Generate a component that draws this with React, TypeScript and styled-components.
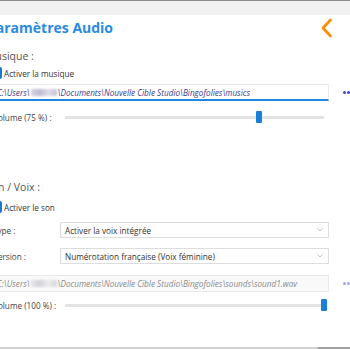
import React from "react";
import styled, { createGlobalStyle } from "styled-components";

const GlobalStyle = createGlobalStyle`
  html, body {
    margin: 0;
    padding: 0;
    background: #ffffff;
  }
  body {
    font-family: "Open Sans", "Noto Sans", sans-serif;
  }
`;

const Page = styled.div`
  width: 350px;
  height: 350px;
  overflow: hidden;
  background: #ffffff;
  display: flex;
  flex-direction: column;
`;

const TopBar = styled.div`
  height: 14px;
  flex: none;
  background: #f1f1f1;
  border-top: 1px solid #8c8c8c;
`;

const Content = styled.div`
  margin-left: -14px;
  width: 364px;
  display: flex;
  flex-direction: column;
`;

const Header = styled.div`
  height: 26px;
  display: flex;
  align-items: center;
  justify-content: space-between;
  padding-right: 17px;
`;

const Title = styled.h1`
  margin: 0 0 0 1px;
  font-size: 14px;
  font-weight: 700;
  line-height: 26px;
  color: #2a8ae2;
`;

const BackButton = styled.button`
  border: none;
  background: none;
  padding: 0;
  width: 14px;
  height: 22px;
  display: flex;
  align-items: center;
  justify-content: center;
  cursor: pointer;
`;

const SectionLabel = styled.div<{ $top: number }>`
  margin-top: ${(p) => p.$top}px;
  font-size: 10.5px;
  line-height: 16px;
  color: #555555;
`;

const CheckRow = styled.label<{ $top: number }>`
  margin-top: ${(p) => p.$top}px;
  margin-left: 4px;
  height: 16px;
  display: flex;
  align-items: center;
  gap: 2px;
  font-size: 8.2px;
  color: #333333;
`;

const CheckBox = styled.span`
  width: 12px;
  height: 12px;
  border-radius: 2px;
  background: #1a78d2;
  display: flex;
  align-items: center;
  justify-content: center;
`;

const PathRow = styled.div<{ $top: number }>`
  margin-top: ${(p) => p.$top}px;
  margin-left: 6px;
  display: flex;
  align-items: center;
  gap: 14px;
`;

const PathBox = styled.div<{ $disabled?: boolean }>`
  width: 337px;
  flex: none;
  box-sizing: border-box;
  height: 17px;
  padding-left: 4px;
  display: flex;
  align-items: center;
  white-space: nowrap;
  overflow: hidden;
  font-size: 8.2px;
  font-style: italic;
  color: ${(p) => (p.$disabled ? "#8c8c8c" : "#3b3b8e")};
  background: ${(p) => (p.$disabled ? "#f9f9f9" : "#ffffff")};
  border: 1px solid #e8e8e8;
  border-bottom: ${(p) => (p.$disabled ? "1px solid #e8e8e8" : "2px solid #1f86de")};
`;

const Blurred = styled.span<{ $light?: boolean }>`
  display: inline-block;
  width: 26px;
  height: 7px;
  margin: 0 1px;
  background: ${(p) =>
    p.$light
      ? "linear-gradient(90deg, #e6e6ea, #d2d2d8, #ebebee, #d6d6dc)"
      : "linear-gradient(90deg, #d8d6e6, #bcbace, #dedcea, #c4c2d6)"};
  filter: blur(0.8px);
`;

const Dots = styled.div<{ $light?: boolean }>`
  display: flex;
  gap: 1px;

  span {
    width: 3px;
    height: 3px;
    border-radius: 50%;
    background: ${(p) => (p.$light ? "#a4a4e4" : "#4343c4")};
  }
`;

const FormRow = styled.div<{ $top: number }>`
  margin-top: ${(p) => p.$top}px;
  margin-left: 7px;
  display: grid;
  grid-template-columns: 67px 269px;
  align-items: center;
  min-height: 16px;
`;

const FieldLabel = styled.span`
  font-size: 8.2px;
  color: #444444;
  white-space: nowrap;
`;

const Select = styled.div`
  box-sizing: border-box;
  height: 16px;
  border: 1px solid #dddddd;
  background: #ffffff;
  padding: 0 5px 0 4px;
  display: flex;
  align-items: center;
  justify-content: space-between;
  font-size: 8.2px;
  color: #333333;
`;

const SliderTrack = styled.div`
  position: relative;
  margin: 0 5px;
  height: 3px;
  background: #e3e3e3;
`;

const SliderThumb = styled.span`
  position: absolute;
  top: -5px;
  width: 6px;
  height: 12px;
  margin-left: -3px;
  border-radius: 1px;
  background: #1a7fd8;
`;

const BottomLine = styled.div`
  margin-top: auto;
  margin-bottom: 1px;
  height: 2px;
  flex: none;
  background: linear-gradient(90deg, #d2d2d2 0, #d2d2d2 318px, #a2a2a2 318px);
`;

const Chevron = () => (
  <svg width="13" height="20" viewBox="0 0 13 20">
    <polyline
      points="10.5,2 3,10 10.5,18"
      fill="none"
      stroke="#ff8a00"
      strokeWidth="2.6"
      strokeLinecap="round"
      strokeLinejoin="round"
    />
  </svg>
);

const Check = () => (
  <svg width="9" height="9" viewBox="0 0 9 9">
    <polyline points="1.5,4.5 3.6,6.6 7.5,2.2" fill="none" stroke="#fff" strokeWidth="1.4" />
  </svg>
);

const Caret = () => (
  <svg width="6" height="4" viewBox="0 0 6 4">
    <polyline points="0.5,0.5 3,3 5.5,0.5" fill="none" stroke="#b0b0b0" strokeWidth="0.8" />
  </svg>
);

const Slider: React.FC<{ value: number }> = ({ value }) => (
  <SliderTrack>
    <SliderThumb style={{ left: `${value}%` }} />
  </SliderTrack>
);

const App: React.FC = () => {
  return (
    <Page>
      <GlobalStyle />
      <TopBar />
      <Content>
        <Header>
          <Title>Paramètres Audio</Title>
          <BackButton aria-label="Retour">
            <Chevron />
          </BackButton>
        </Header>

        <SectionLabel $top={7}>Musique :</SectionLabel>
        <CheckRow $top={1}>
          <CheckBox>
            <Check />
          </CheckBox>
          Activer la musique
        </CheckRow>
        <PathRow $top={3}>
          <PathBox>
            C:\Users\<Blurred />\Documents\Nouvelle Cible Studio\Bingofolies\musics
          </PathBox>
          <Dots>
            <span />
            <span />
            <span />
          </Dots>
        </PathRow>
        <FormRow $top={8}>
          <FieldLabel>Volume (75 %) :</FieldLabel>
          <Slider value={75} />
        </FormRow>

        <SectionLabel $top={54}>Son / Voix :</SectionLabel>
        <CheckRow $top={4}>
          <CheckBox>
            <Check />
          </CheckBox>
          Activer le son
        </CheckRow>
        <FormRow $top={7}>
          <FieldLabel>Type :</FieldLabel>
          <Select>
            Activer la voix intégrée
            <Caret />
          </Select>
        </FormRow>
        <FormRow $top={10}>
          <FieldLabel>Version :</FieldLabel>
          <Select>
            Numérotation française (Voix féminine)
            <Caret />
          </Select>
        </FormRow>
        <PathRow $top={11}>
          <PathBox $disabled>
            C:\Users\<Blurred $light />\Documents\Nouvelle Cible Studio\Bingofolies\sounds\sound1.wav
          </PathBox>
          <Dots $light>
            <span />
            <span />
            <span />
          </Dots>
        </PathRow>
        <FormRow $top={5}>
          <FieldLabel>Volume (100 %) :</FieldLabel>
          <Slider value={100} />
        </FormRow>
      </Content>
      <BottomLine />
    </Page>
  );
};

export default App;
